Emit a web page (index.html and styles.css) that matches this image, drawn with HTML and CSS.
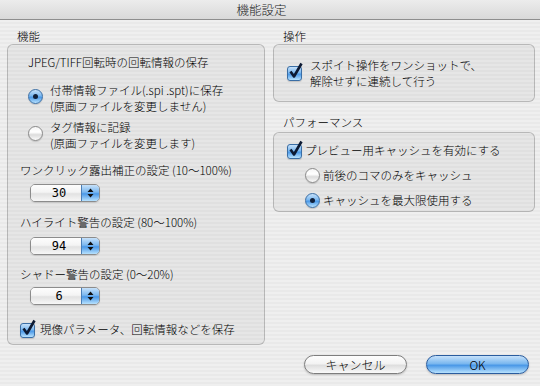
FILE: index.html
```html
<!DOCTYPE html>
<html lang="ja">
<head>
    <meta charset="UTF-8">
    <title>機能設定</title>
    <link rel="stylesheet" href="styles.css">
</head>
<body>
    <div class="window">
        <div class="titlebar">機能設定</div>

        <div class="panes">
            <div class="pane pane-left">
                <div class="group-title">機能</div>
                <div class="group group-main">
                    <div class="heading">JPEG/TIFF回転時の回転情報の保存</div>

                    <div class="radio-row radio-first">
                        <span class="radio on"></span>
                        <div>付帯情報ファイル(.spi .spt)に保存<br>(原画ファイルを変更しません)</div>
                    </div>
                    <div class="radio-row radio-second">
                        <span class="radio"></span>
                        <div>タグ情報に記録<br>(原画ファイルを変更します)</div>
                    </div>

                    <div class="field-label label-exposure">ワンクリック露出補正の設定 (10〜100%)</div>
                    <div class="popup popup-exposure">
                        <span class="popup-value">30</span>
                        <span class="popup-arrows"><svg width="7" height="10" viewBox="0 0 7 10"><path d="M3.5 0.5 L6.5 4 H0.5 Z M3.5 9.5 L6.5 6 H0.5 Z" fill="#111"/></svg></span>
                    </div>

                    <div class="field-label label-highlight">ハイライト警告の設定 (80〜100%)</div>
                    <div class="popup popup-highlight">
                        <span class="popup-value">94</span>
                        <span class="popup-arrows"><svg width="7" height="10" viewBox="0 0 7 10"><path d="M3.5 0.5 L6.5 4 H0.5 Z M3.5 9.5 L6.5 6 H0.5 Z" fill="#111"/></svg></span>
                    </div>

                    <div class="field-label label-shadow">シャドー警告の設定 (0〜20%)</div>
                    <div class="popup popup-shadow">
                        <span class="popup-value">6</span>
                        <span class="popup-arrows"><svg width="7" height="10" viewBox="0 0 7 10"><path d="M3.5 0.5 L6.5 4 H0.5 Z M3.5 9.5 L6.5 6 H0.5 Z" fill="#111"/></svg></span>
                    </div>

                    <div class="check-row check-save">
                        <span class="checkbox"><svg class="tick" width="16" height="18" viewBox="0 0 16 18"><path d="M2.5 9.5 L6 14.5 L13.5 1.5" fill="none" stroke="#0d1a33" stroke-width="2.6" stroke-linejoin="round"/></svg></span>
                        <span>現像パラメータ、回転情報などを保存</span>
                    </div>
                </div>
            </div>

            <div class="pane pane-right">
                <div class="group-title">操作</div>
                <div class="group group-action">
                    <div class="check-row check-dropper">
                        <span class="checkbox"><svg class="tick" width="16" height="18" viewBox="0 0 16 18"><path d="M2.5 9.5 L6 14.5 L13.5 1.5" fill="none" stroke="#0d1a33" stroke-width="2.6" stroke-linejoin="round"/></svg></span>
                        <span>スポイト操作をワンショットで、<br>解除せずに連続して行う</span>
                    </div>
                </div>

                <div class="group-title title-perf">パフォーマンス</div>
                <div class="group group-perf">
                    <div class="check-row check-cache">
                        <span class="checkbox"><svg class="tick" width="16" height="18" viewBox="0 0 16 18"><path d="M2.5 9.5 L6 14.5 L13.5 1.5" fill="none" stroke="#0d1a33" stroke-width="2.6" stroke-linejoin="round"/></svg></span>
                        <span>プレビュー用キャッシュを有効にする</span>
                    </div>
                    <div class="radio-row sub-radio">
                        <span class="radio"></span>
                        <div>前後のコマのみをキャッシュ</div>
                    </div>
                    <div class="radio-row sub-radio">
                        <span class="radio on"></span>
                        <div>キャッシュを最大限使用する</div>
                    </div>
                </div>
            </div>
        </div>

        <div class="buttons">
            <button class="btn btn-cancel">キャンセル</button>
            <button class="btn btn-ok">OK</button>
        </div>
    </div>
</body>
</html>
```

FILE: styles.css
```css
body {
    margin: 0;
    font-family: "Noto Sans CJK JP", sans-serif;
    font-size: 11.5px;
    font-weight: 300;
    color: #000;
}
.window {
    width: 540px;
    height: 386px;
    overflow: hidden;
    background: repeating-linear-gradient(#efefef 0 2px, #e9e9e9 2px 4px);
}
.titlebar {
    height: 19px;
    line-height: 19px;
    padding-right: 17px;
    text-align: center;
    font-size: 12.5px;
    color: #1a1a1a;
    background: linear-gradient(#ececec, #d9d9d9);
    border-bottom: 1px solid #8e8e8e;
}
.panes {
    display: flex;
    gap: 8px;
    padding: 8px 5px 0 7px;
}
.pane-left {
    width: 258px;
}
.pane-right {
    width: 262px;
}
.group-title {
    height: 16px;
    line-height: 16px;
    padding-left: 10px;
}
.title-perf {
    margin-top: 12px;
    margin-bottom: 2px;
}
.group {
    border: 1px solid rgba(0, 0, 0, 0.2);
    border-radius: 6px;
    background: rgba(0, 0, 0, 0.035);
    box-sizing: border-box;
}
.group-main {
    height: 301px;
    padding: 9px 0 0 12px;
}
.group-action {
    height: 58px;
    padding: 12px 0 0 13px;
}
.group-perf {
    height: 80px;
    padding: 9px 0 0 13px;
}
.heading {
    line-height: 16px;
    margin-left: 8px;
}
.radio-row {
    display: flex;
    align-items: flex-start;
    gap: 7px;
    line-height: 16px;
}
.radio-first {
    margin: 12px 0 0 8px;
}
.radio-second {
    margin: 5px 0 0 8px;
}
.radio {
    flex: none;
    width: 13px;
    height: 13px;
    margin-top: 3px;
    border-radius: 50%;
    border: 1px solid #8a8a8a;
    background: linear-gradient(#f6f6f6, #ffffff 40%, #dcdcdc 60%, #fafafa);
    box-shadow: 0 1px 1px rgba(0, 0, 0, 0.15);
    position: relative;
}
.radio-first .radio,
.radio-second .radio {
    margin-top: 7px;
}
.radio.on {
    border-color: #3a6ea5;
    background: linear-gradient(#c6e1fa, #7ab7ef 45%, #4a98e7 55%, #b8e2fe);
}
.radio.on::after {
    content: "";
    position: absolute;
    left: 4px;
    top: 4px;
    width: 5px;
    height: 5px;
    border-radius: 50%;
    background: #10203a;
}
.field-label {
    line-height: 16px;
}
.label-exposure {
    margin-top: 11px;
}
.label-highlight {
    margin-top: 12px;
}
.label-shadow {
    margin-top: 11px;
}
.popup {
    display: flex;
    width: 70px;
    height: 18px;
    margin-left: 10px;
    box-sizing: border-box;
    border: 1px solid #8c8c8c;
    border-radius: 5px;
    overflow: hidden;
    box-shadow: 0 1px 1px rgba(0, 0, 0, 0.12);
}
.popup-exposure {
    margin-top: 6px;
}
.popup-highlight {
    margin-top: 7px;
}
.popup-shadow {
    margin-top: 5px;
}
.popup-value {
    flex: 1;
    text-align: center;
    padding-left: 6px;
    line-height: 16px;
    font-family: "DejaVu Sans Mono", monospace;
    font-size: 12px;
    font-weight: normal;
    background: linear-gradient(#fdfdfd, #f4f4f4 45%, #e2e2e2 55%, #f7f7f7);
}
.popup-arrows {
    display: flex;
    align-items: center;
    justify-content: center;
    width: 17px;
    border-left: 1px solid #4a7fb8;
    background: linear-gradient(#c6e1fa, #7ab7ef 45%, #4a98e7 55%, #b8e2fe);
}
.check-row {
    display: flex;
    align-items: flex-start;
    line-height: 16px;
}
.checkbox {
    flex: none;
    position: relative;
    width: 13px;
    height: 13px;
    margin-top: 2px;
    border: 1px solid #3a6ea5;
    border-radius: 3px;
    background: linear-gradient(#c6e1fa, #7ab7ef 45%, #4a98e7 55%, #b8e2fe);
    box-shadow: 0 1px 1px rgba(0, 0, 0, 0.15);
}
.tick {
    position: absolute;
    left: 0;
    top: -5px;
}
.check-save {
    margin-top: 16px;
    gap: 5px;
}
.check-dropper {
    gap: 8px;
}
.check-dropper .checkbox {
    margin-top: 9px;
}
.check-cache {
    gap: 3px;
}
.sub-radio {
    margin: 8px 0 0 18px;
    gap: 3px;
}
.sub-radio + .sub-radio {
    margin-top: 9px;
}
.sub-radio .radio {
    margin-top: 1px;
}
.buttons {
    display: flex;
    justify-content: flex-end;
    gap: 19px;
    padding: 10px 11px 0 0;
}
.btn {
    width: 103px;
    height: 19px;
    border: 1px solid #7d7d7d;
    border-radius: 10px;
    font-family: "Noto Sans CJK JP", sans-serif;
    font-size: 12px;
    font-weight: 300;
    line-height: 17px;
    padding: 0;
    color: #000;
    background: linear-gradient(#fdfdfd, #f3f3f3 45%, #dedede 55%, #fafafa);
    box-shadow: 0 1px 2px rgba(0, 0, 0, 0.2);
}
.btn-ok {
    border-color: #2a5c9e;
    background: linear-gradient(#c6e1fa, #7ab7ef 45%, #4a98e7 55%, #b8e2fe);
}
```
